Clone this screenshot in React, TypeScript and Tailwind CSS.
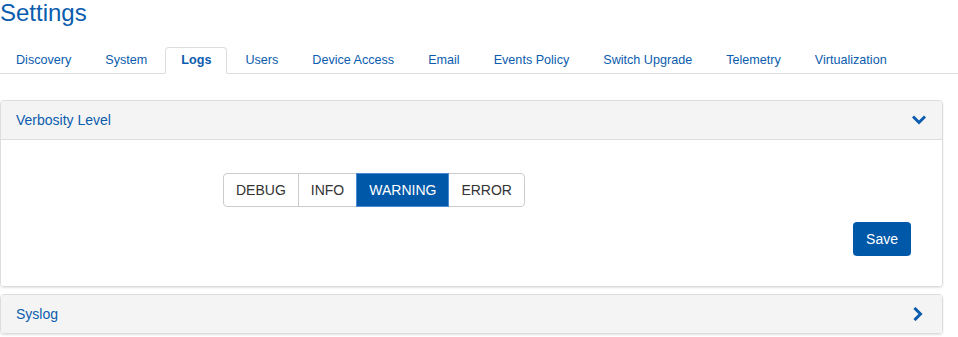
import React from "react";

const tabs = [
  "Discovery",
  "System",
  "Logs",
  "Users",
  "Device Access",
  "Email",
  "Events Policy",
  "Switch Upgrade",
  "Telemetry",
  "Virtualization",
];

const levels = ["DEBUG", "INFO", "WARNING", "ERROR"];

function ChevronDown() {
  return (
    <svg width="14" height="10" viewBox="0 0 14 10" className="block">
      <polyline
        points="2,2.5 7,7.5 12,2.5"
        fill="none"
        stroke="#0b5cae"
        strokeWidth="3"
        strokeLinecap="square"
      />
    </svg>
  );
}

function ChevronRight() {
  return (
    <svg width="10" height="14" viewBox="0 0 10 14" className="block">
      <polyline
        points="2.5,2 7.5,7 2.5,12"
        fill="none"
        stroke="#0b5cae"
        strokeWidth="3"
        strokeLinecap="square"
      />
    </svg>
  );
}

export default function App() {
  return (
    <div
      className="w-[958px] h-[337px] bg-white pr-[15px] overflow-hidden"
      style={{ fontFamily: '"Liberation Sans", Arial, sans-serif' }}
    >
      <h1 className="text-[24px] leading-[1.1] text-[#0b5cae] m-0 font-normal">Settings</h1>

      <div className="mt-[21px] flex border-b border-[#dddddd] w-[958px] -mr-[15px]">
        {tabs.map((t) => {
          const active = t === "Logs";
          return (
            <div
              key={t}
              className={
                "h-[27px] mr-[2px] -mb-px px-[15px] flex items-center text-[12.6px] rounded-t-[4px] border " +
                (active
                  ? "border-[#dddddd] border-b-white bg-white font-bold text-[#0b5cae]"
                  : "border-transparent text-[#0b5cae]")
              }
            >
              {t}
            </div>
          );
        })}
      </div>

      <div className="mt-[26px] border border-[#dddddd] rounded-[4px] shadow-[0_1px_2px_rgba(0,0,0,0.12)] overflow-hidden">
        <div className="h-[39px] bg-[#f4f4f4] border-b border-[#dddddd] flex items-center justify-between pl-[15px] pr-[16px]">
          <span className="text-[14px] text-[#0b5cae]">Verbosity Level</span>
          <ChevronDown />
        </div>
        <div className="bg-white pt-[33px] pb-[30px] pr-[31px]">
          <div className="ml-[222px] flex">
            {levels.map((l, i) => {
              const active = l === "WARNING";
              return (
                <div
                  key={l}
                  className={
                    "h-[34px] px-[12px] flex items-center text-[14px] border " +
                    (i === 0 ? "rounded-l-[4px] " : "-ml-px ") +
                    (i === levels.length - 1 ? "rounded-r-[4px] " : "") +
                    (active
                      ? "bg-[#0058a9] border-[#4a8ad4] text-white relative"
                      : "bg-white border-[#cccccc] text-[#333333]")
                  }
                >
                  {l}
                </div>
              );
            })}
          </div>
          <div className="mt-[15px] flex justify-end">
            <div className="h-[34px] px-[13px] flex items-center rounded-[4px] bg-[#0058a9] text-white text-[14px]">
              Save
            </div>
          </div>
        </div>
      </div>

      <div className="mt-[7px] border border-[#dddddd] rounded-[4px] shadow-[0_1px_2px_rgba(0,0,0,0.12)] overflow-hidden">
        <div className="h-[38px] bg-[#f4f4f4] flex items-center justify-between pl-[15px] pr-[19px]">
          <span className="text-[14px] text-[#0b5cae]">Syslog</span>
          <ChevronRight />
        </div>
      </div>
    </div>
  );
}
